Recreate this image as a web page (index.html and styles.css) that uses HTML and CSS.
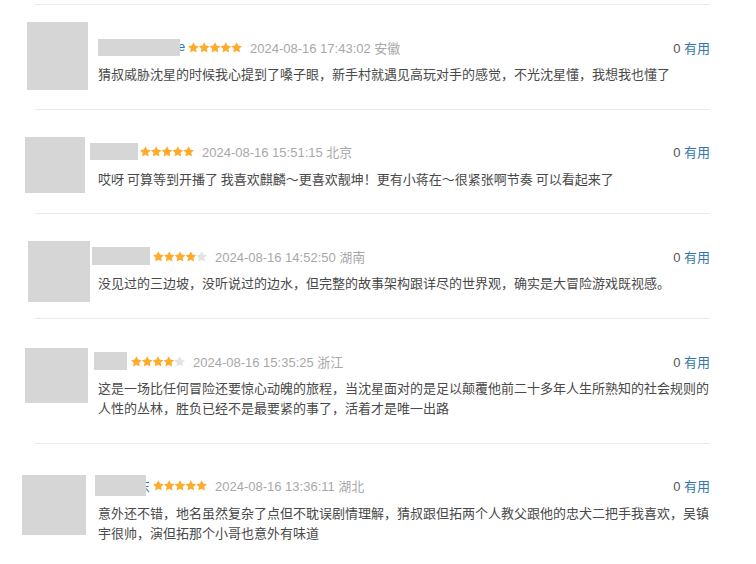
FILE: index.html
```html
<!DOCTYPE html>
<html lang="zh-CN">
<head>
<meta charset="utf-8">
<title>短评</title>
<link rel="stylesheet" href="styles.css">
</head>
<body>
<svg class="defs" aria-hidden="true">
  <symbol id="star" viewBox="0 0 11 11">
    <polygon points="5.5,0.2 7.2,3.55 10.92,4.14 8.26,6.8 8.85,10.51 5.5,8.8 2.15,10.51 2.74,6.8 0.08,4.14 3.8,3.55"/>
  </symbol>
</svg>
<div class="list">
  <div class="item r1">
    <div class="side"><div class="avatar"></div></div>
    <div class="main">
      <div class="head">
        <span class="name"><span class="mask"></span><span class="tail"><span class="glyph">e</span></span></span>
        <svg class="stars" viewBox="0 0 54 11"><use href="#star" x="0" width="10.8" height="11" class="on"/><use href="#star" x="10.8" width="10.8" height="11" class="on"/><use href="#star" x="21.6" width="10.8" height="11" class="on"/><use href="#star" x="32.4" width="10.8" height="11" class="on"/><use href="#star" x="43.2" width="10.8" height="11" class="on"/></svg>
        <span class="time">2024-08-16 17:43:02 安徽</span>
        <span class="votes"><span class="count">0</span> <a class="useful">有用</a></span>
      </div>
      <p class="text">猜叔威胁沈星的时候我心提到了嗓子眼，新手村就遇见高玩对手的感觉，不光沈星懂，我想我也懂了</p>
    </div>
  </div>
  <div class="item r2">
    <div class="side"><div class="avatar"></div></div>
    <div class="main">
      <div class="head">
        <span class="name"><span class="mask"></span></span>
        <svg class="stars" viewBox="0 0 54 11"><use href="#star" x="0" width="10.8" height="11" class="on"/><use href="#star" x="10.8" width="10.8" height="11" class="on"/><use href="#star" x="21.6" width="10.8" height="11" class="on"/><use href="#star" x="32.4" width="10.8" height="11" class="on"/><use href="#star" x="43.2" width="10.8" height="11" class="on"/></svg>
        <span class="time">2024-08-16 15:51:15 北京</span>
        <span class="votes"><span class="count">0</span> <a class="useful">有用</a></span>
      </div>
      <p class="text">哎呀 可算等到开播了 我喜欢麒麟～更喜欢靓坤！更有小蒋在～很紧张啊节奏 可以看起来了</p>
    </div>
  </div>
  <div class="item r3">
    <div class="side"><div class="avatar"></div></div>
    <div class="main">
      <div class="head">
        <span class="name"><span class="mask"></span></span>
        <svg class="stars" viewBox="0 0 54 11"><use href="#star" x="0" width="10.8" height="11" class="on"/><use href="#star" x="10.8" width="10.8" height="11" class="on"/><use href="#star" x="21.6" width="10.8" height="11" class="on"/><use href="#star" x="32.4" width="10.8" height="11" class="on"/><use href="#star" x="43.2" width="10.8" height="11" class="off"/></svg>
        <span class="time">2024-08-16 14:52:50 湖南</span>
        <span class="votes"><span class="count">0</span> <a class="useful">有用</a></span>
      </div>
      <p class="text">没见过的三边坡，没听说过的边水，但完整的故事架构跟详尽的世界观，确实是大冒险游戏既视感。</p>
    </div>
  </div>
  <div class="item r4">
    <div class="side"><div class="avatar"></div></div>
    <div class="main">
      <div class="head">
        <span class="name"><span class="mask"></span></span>
        <svg class="stars" viewBox="0 0 54 11"><use href="#star" x="0" width="10.8" height="11" class="on"/><use href="#star" x="10.8" width="10.8" height="11" class="on"/><use href="#star" x="21.6" width="10.8" height="11" class="on"/><use href="#star" x="32.4" width="10.8" height="11" class="on"/><use href="#star" x="43.2" width="10.8" height="11" class="off"/></svg>
        <span class="time">2024-08-16 15:35:25 浙江</span>
        <span class="votes"><span class="count">0</span> <a class="useful">有用</a></span>
      </div>
      <p class="text">这是一场比任何冒险还要惊心动魄的旅程，当沈星面对的是足以颠覆他前二十多年人生所熟知的社会规则的人性的丛林，胜负已经不是最要紧的事了，活着才是唯一出路</p>
    </div>
  </div>
  <div class="item r5">
    <div class="side"><div class="avatar"></div></div>
    <div class="main">
      <div class="head">
        <span class="name"><span class="mask"></span><span class="tail"><span class="glyph">东</span></span></span>
        <svg class="stars" viewBox="0 0 54 11"><use href="#star" x="0" width="10.8" height="11" class="on"/><use href="#star" x="10.8" width="10.8" height="11" class="on"/><use href="#star" x="21.6" width="10.8" height="11" class="on"/><use href="#star" x="32.4" width="10.8" height="11" class="on"/><use href="#star" x="43.2" width="10.8" height="11" class="on"/></svg>
        <span class="time">2024-08-16 13:36:11 湖北</span>
        <span class="votes"><span class="count">0</span> <a class="useful">有用</a></span>
      </div>
      <p class="text">意外还不错，地名虽然复杂了点但不耽误剧情理解，猜叔跟但拓两个人教父跟他的忠犬二把手我喜欢，吴镇宇很帅，演但拓那个小哥也意外有味道</p>
    </div>
  </div>
</div>
</body>
</html>
```

FILE: styles.css
```css
html, body {
  margin: 0;
  padding: 0;
  background: #fff;
}

body {
  font-family: "Liberation Sans", Arial, "Noto Sans CJK SC", sans-serif;
  font-size: 13px;
  color: #494949;
}

.defs {
  display: block;
  width: 0;
  height: 0;
  overflow: hidden;
}

.list {
  margin: 4px 0 0 35px;
  width: 675px;
}

.item {
  display: flex;
  align-items: flex-start;
  border-top: 1px solid #ebebeb;
}

.side {
  flex: 0 0 63px;
  width: 63px;
}

.avatar {
  background: #d6d6d6;
}

.main {
  flex: 0 0 612px;
  width: 612px;
  padding-bottom: 24.7px;
}

.head {
  display: flex;
  align-items: center;
  height: 20px;
  margin-top: 32px;
  white-space: nowrap;
}

.name {
  display: flex;
  align-items: center;
  color: #3377aa;
}

.mask {
  display: block;
  background: #d6d6d6;
}

.tail {
  display: block;
  line-height: 20px;
  overflow: hidden;
}

.glyph {
  display: inline-block;
}

.stars {
  display: block;
  width: 54px;
  height: 11px;
  flex: none;
}

.stars .on {
  fill: #ffac2d;
}

.stars .off {
  fill: #e3e3e3;
}

.time {
  margin-left: 8px;
  color: #a8a8a8;
}

.votes {
  margin-left: auto;
  color: #555;
}

.useful {
  color: #3377aa;
  text-decoration: none;
}

.text {
  margin: 7px 0 0;
  line-height: 20px;
  font-family: "Noto Sans CJK SC", "Liberation Sans", sans-serif;
}

/* per-row variants */
.r1 .avatar { margin: 17px 0 0 -8px; width: 61px; height: 68px; }
.r1 .mask { width: 82px; height: 17px; }
.r1 .tail { width: 5px; }
.r1 .glyph { margin-left: -2px; }
.r1 .stars { margin-left: 3px; }

.r2 .avatar { margin: 27px 0 0 -10px; width: 60px; height: 56px; }
.r2 .mask { margin-left: -8px; width: 48px; height: 17px; }
.r2 .stars { margin-left: 2px; }

.r3 .avatar { margin: 27px 0 0 -7px; width: 62px; height: 61px; }
.r3 .mask { margin-left: -6px; width: 58px; height: 18px; }
.r3 .stars { margin-left: 3px; }

.r4 .avatar { margin: 29px 0 0 -10px; width: 63px; height: 55px; }
.r4 .mask { margin-left: -4px; width: 33px; height: 18px; }
.r4 .stars { margin-left: 4px; }

.r5 .avatar { margin: 31px 0 0 -13px; width: 64px; height: 60px; }
.r5 .mask { margin-left: -3px; width: 51px; height: 21px; }
.r5 .tail { width: 4px; font-family: "Noto Sans CJK SC", sans-serif; }
.r5 .glyph { margin-left: -9px; }
.r5 .stars { margin-left: 3px; }
```
